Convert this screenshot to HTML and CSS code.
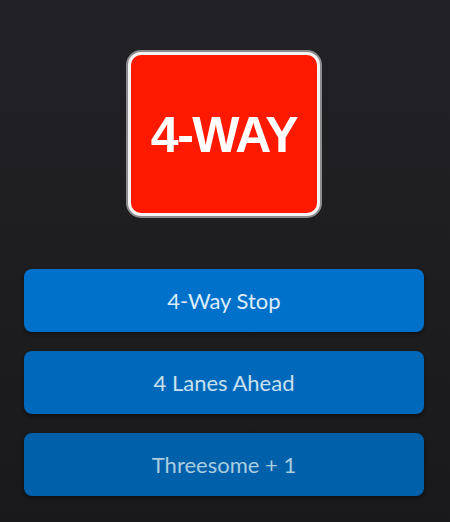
FILE: index.html
```html
<!DOCTYPE html>
<html>
<head>
<meta charset="utf-8">
<link rel="stylesheet" href="styles.css">
</head>
<body>
<div class="screen">
  <div class="sign-wrap">
    <div class="sign">
      <div class="sign-inner">
        <span class="sign-text">4-WAY</span>
      </div>
    </div>
  </div>
  <div class="choices">
    <button class="choice c1">4-Way Stop</button>
    <button class="choice c2">4 Lanes Ahead</button>
    <button class="choice c3">Threesome + 1</button>
  </div>
</div>
</body>
</html>
```
FILE: styles.css
```css
html, body {
  margin: 0;
  padding: 0;
}
body {
  width: 450px;
  height: 522px;
  overflow: hidden;
  background: linear-gradient(180deg, #222226 0%, #1d1d20 60%, #19191b 100%);
  font-family: Lato, "Open Sans", sans-serif;
}
.screen {
  display: flex;
  flex-direction: column;
  align-items: center;
  padding-top: 50px;
  padding-right: 2px;
}
.sign-wrap {
  display: flex;
  justify-content: center;
}
.sign {
  width: 196px;
  height: 168px;
  box-sizing: border-box;
  border-radius: 15px;
  background: #8c8c8f;
  padding: 2px;
}
.sign-inner {
  width: 100%;
  height: 100%;
  box-sizing: border-box;
  border-radius: 13px;
  border: 3px solid #f4f4f4;
  background: #fe1a00;
  display: flex;
  align-items: center;
  justify-content: center;
}
.sign-text {
  font-family: "Liberation Sans", Arial, sans-serif;
  font-weight: bold;
  font-size: 50px;
  letter-spacing: -1.5px;
  color: #ffffff;
  line-height: 1;
  margin-top: 2px;
}
.choices {
  margin-top: 51px;
  display: flex;
  flex-direction: column;
  gap: 19px;
  width: 400px;
}
.choice {
  height: 63px;
  border: none;
  border-radius: 8px;
  font-family: Lato, "Open Sans", sans-serif;
  font-size: 22px;
  box-shadow: 0 2px 4px rgba(0,0,0,0.45);
  padding: 0;
}
.c1 {
  background: #0071ca;
  color: #dcecf8;
}
.c2 {
  background: #0068ba;
  color: #c8e0f0;
}
.c3 {
  background: #0060aa;
  color: #aacde0;
}
```
